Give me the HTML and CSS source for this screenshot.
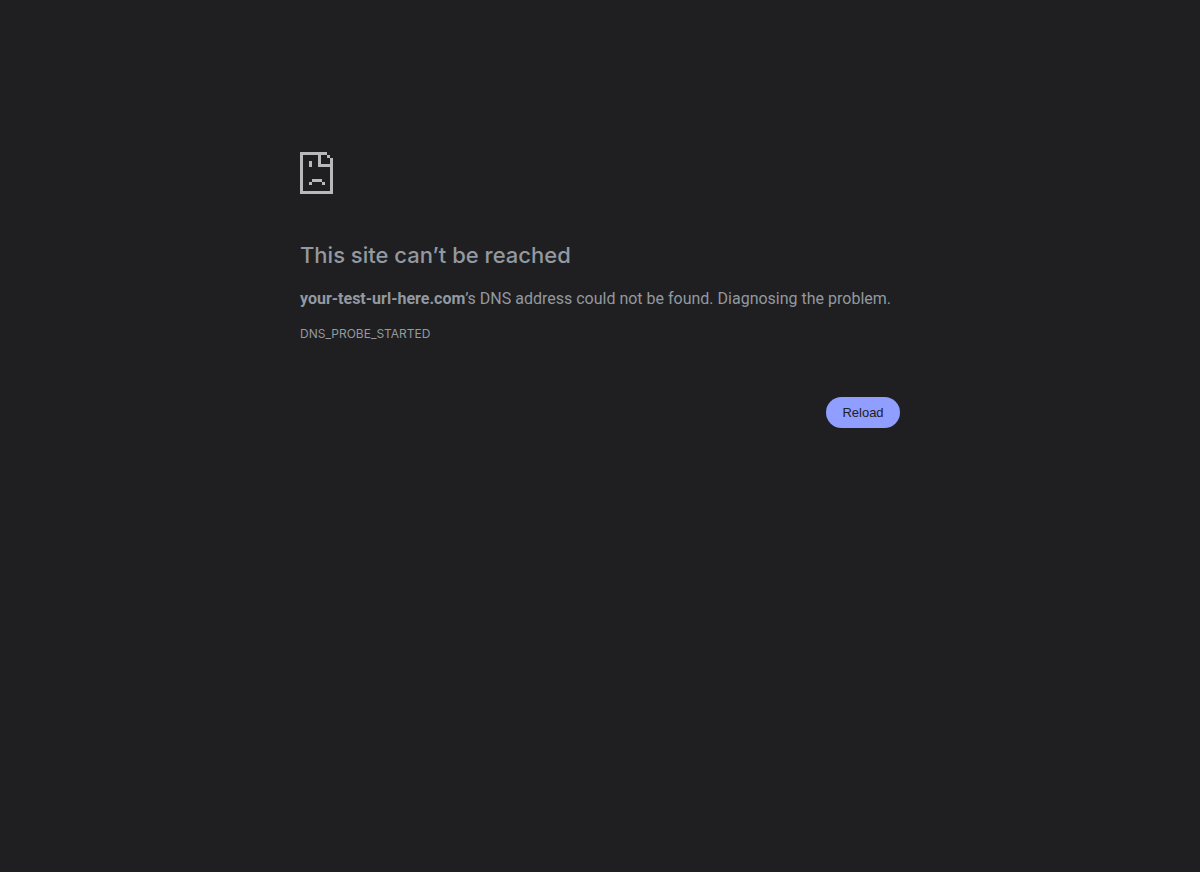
FILE: index.html
```html
<!DOCTYPE html>
<html lang="en">
<head>
<meta charset="utf-8">
<meta name="viewport" content="width=device-width, initial-scale=1">
<title>your-test-url-here.com</title>
<link rel="stylesheet" href="styles.css">
</head>
<body>
<main class="error-page">
  <svg class="error-icon" viewBox="0 0 33 42" shape-rendering="crispEdges" aria-hidden="true">
    <path d="M0 0h27v3H21v9h9V6h3v36H0zM3 3v36h27V15H18V3zM27 3h3v3h-3zM9 9h3v6H9zM12 27h10v3H12zM9 30h3v3H9zM22 30h3v3h-3z" fill-rule="evenodd"/>
  </svg>
  <h1 class="title">This site can’t be reached</h1>
  <p class="summary"><strong>your-test-url-here.com</strong>’s DNS address could not be found. Diagnosing the problem.</p>
  <p class="code">DNS_PROBE_STARTED</p>
  <div class="actions"><button class="reload" type="button">Reload</button></div>
</main>
</body>
</html>
```

FILE: styles.css
```css
body {
  margin: 0;
  background: #1f1f21;
  color: #9299a0;
  font-family: Inter, "Liberation Sans", sans-serif;
}
.error-page {
  max-width: 600px;
  margin: 0 auto;
  padding-top: 152px;
}
.error-icon {
  display: block;
  width: 33px;
  height: 42px;
  fill: #b9b9b9;
}
.title {
  margin: 46px 0 17px;
  font-size: 22px;
  line-height: 30px;
  font-weight: 500;
}
.summary {
  margin: 0;
  font-family: Roboto, sans-serif;
  font-size: 16px;
  line-height: 24px;
}
.code {
  margin: 14px 0 0;
  font-size: 12px;
  line-height: 18px;
}
.actions {
  display: flex;
  justify-content: flex-end;
  margin-top: 54px;
}
.reload {
  min-width: 74px;
  padding: 8px 16px;
  border: 0;
  border-radius: 20px;
  background: #8f9eff;
  color: #202124;
  font: 13px/15px "Liberation Sans", sans-serif;
}
```
